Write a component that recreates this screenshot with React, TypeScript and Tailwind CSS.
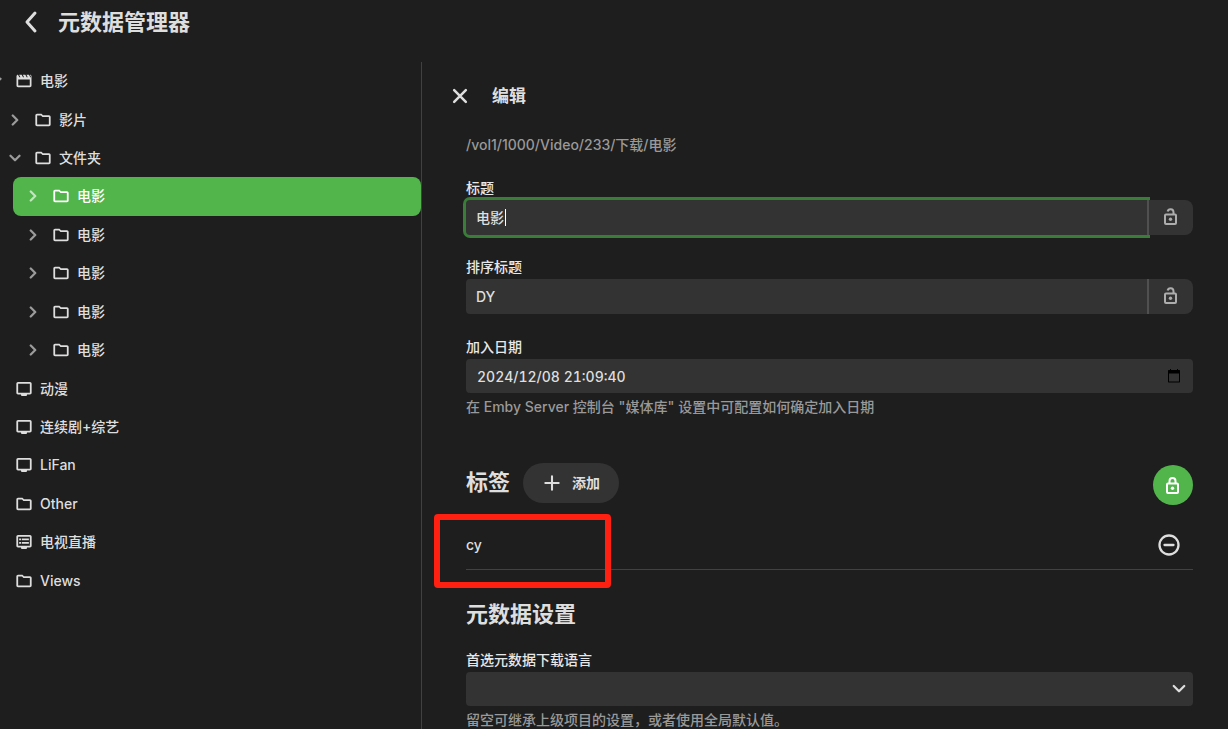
import type { ReactNode } from "react";
import clsx from "clsx";

type IconName = "movie" | "folder" | "tv" | "livetv";

type TreeItem = {
  label: string;
  icon: IconName;
  level: 0 | 1 | 2;
  arrow?: "right" | "down";
  selected?: boolean;
};

const tree: TreeItem[] = [
  { label: "电影", icon: "movie", level: 0, arrow: "down" },
  { label: "影片", icon: "folder", level: 1, arrow: "right" },
  { label: "文件夹", icon: "folder", level: 1, arrow: "down" },
  { label: "电影", icon: "folder", level: 2, arrow: "right", selected: true },
  { label: "电影", icon: "folder", level: 2, arrow: "right" },
  { label: "电影", icon: "folder", level: 2, arrow: "right" },
  { label: "电影", icon: "folder", level: 2, arrow: "right" },
  { label: "电影", icon: "folder", level: 2, arrow: "right" },
  { label: "动漫", icon: "tv", level: 0 },
  { label: "连续剧+综艺", icon: "tv", level: 0 },
  { label: "LiFan", icon: "tv", level: 0 },
  { label: "Other", icon: "folder", level: 0 },
  { label: "电视直播", icon: "livetv", level: 0 },
  { label: "Views", icon: "folder", level: 0 },
];

const levelClass = {
  0: "-ml-[13px]",
  1: "pl-[6px]",
  2: "ml-[13px] pl-[11px]",
};

function StrokeIcon({ d, className, width = 2 }: { d: string; className: string; width?: number }) {
  return (
    <svg
      viewBox="0 0 24 24"
      className={className}
      fill="none"
      stroke="currentColor"
      strokeWidth={width}
      strokeLinecap="round"
      strokeLinejoin="round"
      aria-hidden="true"
    >
      <path d={d} />
    </svg>
  );
}

const iconPaths: Record<IconName, string> = {
  folder:
    "M9.300 5.900l2 2.100h8.500v10.100H4.200V5.900h5.100M10 3.800H4c-1.200 0-2.200 1-2.200 2.200v12c0 1.200 1 2.200 2.200 2.200h16c1.200 0 2.200-1 2.200-2.200V8c0-1.200-1-2.200-2.200-2.200h-8z",
  movie:
    "M4 3.500l1.800 3.500h1.400L5.500 3.500h3.400L10.700 7h1.400L10.400 3.500h3.400L15.600 7H17l-1.700-3.500h3.300L20.400 7h1.100L20 3.500c1.200 0 2 .9 2 2V18c0 1.200-.9 2.200-2.200 2.200H4.200C2.900 20.200 2 19.200 2 18V5.500c0-1.100.8-2 2-2zM4.300 10v7.900h15.400V10z",
  tv: "M20 2.700H4c-1.200 0-2.200 1-2.200 2.300v12c0 1.300 1 2.200 2.200 2.200h4v.8c0 .8.500 1.300 1.200 1.300h5.600c.7 0 1.200-.5 1.200-1.300v-.8h4c1.200 0 2.200-.9 2.200-2.200V5c0-1.300-1-2.300-2.200-2.300zm-.2 14.200H4.200V5.100h15.600v11.800z",
  livetv:
    "M20 2.700H4c-1.200 0-2.200 1-2.200 2.300v12c0 1.300 1 2.200 2.200 2.200h4v.8c0 .8.500 1.300 1.200 1.300h5.600c.7 0 1.200-.5 1.200-1.300v-.8h4c1.200 0 2.200-.9 2.200-2.200V5c0-1.300-1-2.300-2.200-2.300zm-.2 14.200H4.200V5.100h15.600v11.800zM5.500 7.300H8v2.200H5.500zM9 7.300h9.500v2.200H9zM5.500 12H8v2.200H5.500zM9 12h9.500v2.200H9z",
};

function ItemIcon({ name }: { name: IconName }) {
  return (
    <svg viewBox="0 0 24 24" className="size-[18px] shrink-0" fill="currentColor" aria-hidden="true">
      <path d={iconPaths[name]} fillRule="evenodd" />
    </svg>
  );
}

function LockIcon({ open }: { open?: boolean }) {
  return (
    <svg viewBox="0 0 16 17" className="h-[17px] w-4" fill="none" stroke="currentColor" strokeWidth={2} aria-hidden="true">
      <rect x="2" y="6.500" width="11" height="9.500" rx="1" />
      <path d={open ? "M4.600 3.400a3 3 0 0 1 5.900.6v2.500" : "M4.500 6.500V4a3 3 0 0 1 6 0v2.500"} />
      <circle cx="7.500" cy="11.200" r="1.700" fill="currentColor" stroke="none" />
    </svg>
  );
}

function TreeRow({ item }: { item: TreeItem }) {
  return (
    <li className="flex">
      <button
        type="button"
        className={clsx(
          "flex flex-1 items-center rounded-lg text-left whitespace-nowrap",
          levelClass[item.level],
          item.selected && "bg-[#52b54b] text-white",
        )}
      >
        <span className="mr-[10px] flex size-[18px] shrink-0 items-center justify-center opacity-65">
          {item.arrow === "right" && <StrokeIcon d="M9 6l6 6-6 6" className="size-[18px] shrink-0" width={3} />}
          {item.arrow === "down" && <StrokeIcon d="M6 9l6 6 6-6" className="size-[18px] shrink-0" width={3} />}
        </span>
        <ItemIcon name={item.icon} />
        <span className="ml-[7px]">{item.label}</span>
      </button>
    </li>
  );
}

function Label({ htmlFor, children }: { htmlFor: string; children: ReactNode }) {
  return (
    <label htmlFor={htmlFor} className="block h-6 leading-6 text-[#e8e8e8]">
      {children}
    </label>
  );
}

function LockButton() {
  return (
    <button
      type="button"
      aria-label="锁定"
      className="flex w-[46px] items-center justify-center rounded-r-lg border-l-2 border-[#505050] bg-[#333] pb-[2px] text-[#adadad]"
    >
      <LockIcon open />
    </button>
  );
}

export default function App() {
  return (
    <div className="flex h-screen flex-col overflow-hidden bg-[#1e1e1e] font-['Inter','Noto_Sans_CJK_SC',sans-serif] text-sm font-medium text-[#dedede]">
      <header className="flex h-[62px] shrink-0 items-start pt-[6px] pl-[18px]">
        <button type="button" aria-label="返回" className="flex size-8 items-center pl-px">
          <StrokeIcon d="M16 3l-8 9 8 9" className="size-6" width={3} />
        </button>
        <h1 className="ml-2 text-[22px] leading-8 font-bold">元数据管理器</h1>
      </header>

      <div className="flex min-h-0 flex-1">
        <nav className="w-[422px] shrink-0 overflow-hidden border-r border-[#414141]">
          <ul className="grid h-[538px] auto-rows-fr">
            {tree.map((item, i) => (
              <TreeRow key={i} item={item} />
            ))}
          </ul>
        </nav>

        <main className="min-w-0 flex-1 overflow-hidden pr-[35px] pl-11">
          <div className="-ml-[18px] flex h-[68px] items-center">
            <button type="button" aria-label="关闭" className="flex size-6 items-center justify-center">
              <StrokeIcon d="M5 5l14 14M19 5L5 19" className="size-5" width={3} />
            </button>
            <h2 className="ml-5 text-[17px] font-bold">编辑</h2>
          </div>

          <p className="mt-[3px] h-[43px] leading-6 text-[#999]">/vol1/1000/Video/233/下载/电影</p>

          <Label htmlFor="title">标题</Label>
          <div className="relative flex h-[35px]">
            <input
              id="title"
              defaultValue="电影"
              className="min-w-0 flex-1 rounded-l-sm bg-[#333] px-[10px] ring-3 ring-[#3a7d38] outline-none"
            />
            <span className="absolute top-[9px] left-[39px] h-[17px] w-px bg-white" />
            <LockButton />
          </div>

          <div className="mt-5">
            <Label htmlFor="sort">排序标题</Label>
            <div className="flex h-[35px]">
              <input id="sort" defaultValue="DY" className="min-w-0 flex-1 rounded-l-sm bg-[#333] px-[10px] outline-none" />
              <LockButton />
            </div>
          </div>

          <div className="mt-[21px]">
            <Label htmlFor="added">加入日期</Label>
            <div className="flex h-[34px] items-center rounded-sm bg-[#333] pr-3">
              <input
                id="added"
                defaultValue="2024/12/08 21:09:40"
                className="h-full min-w-0 flex-1 bg-transparent pl-[11px] tabular-nums outline-none"
              />
              <svg viewBox="0 0 14 14" className="size-[14px] text-black" fill="currentColor" aria-hidden="true">
                <path d="M3 0h1v1h6V0h1v1h1.500l.5.500V13l-.5.500h-11L1 13V1.500L1.500 1H3zM2 4.500v8h10v-8z" fillRule="evenodd" />
              </svg>
            </div>
            <p className="mt-[2px] leading-6 text-[#999]">在 Emby Server 控制台 "媒体库" 设置中可配置如何确定加入日期</p>
          </div>

          <div className="mt-11 flex h-10 items-center">
            <h2 className="text-[22px] font-bold">标签</h2>
            <button type="button" className="ml-[13px] flex h-10 w-24 items-center justify-center rounded-full bg-[#333] font-bold">
              <StrokeIcon d="M12 4v16M4 12h16" className="mr-[10px] size-5" width={2.5} />
              添加
            </button>
            <button
              type="button"
              aria-label="锁定标签"
              className="mt-1 ml-auto flex size-10 items-center justify-center rounded-full bg-[#52b54b] text-white"
            >
              <LockIcon />
            </button>
          </div>

          <div className="relative mt-[17px]">
            <div className="flex h-[50px] items-center border-b border-[#424242] pr-3">
              <span className="flex-1">cy</span>
              <button type="button" aria-label="移除">
                <StrokeIcon d="M7.500 12h9M21.500 12a9.500 9.500 0 1 1-19 0a9.500 9.500 0 1 1 19 0" className="size-6" width={2.3} />
              </button>
            </div>
            <div className="pointer-events-none absolute -top-[6px] -left-8 h-[74px] w-[177px] rounded border-6 border-[#ff2012]" />
          </div>

          <h2 className="mt-7 text-[22px] leading-8 font-bold">元数据设置</h2>

          <div className="mt-[18px]">
            <Label htmlFor="language">首选元数据下载语言</Label>
            <div className="relative">
              <select id="language" className="block h-[34px] w-full appearance-none rounded-sm bg-[#333] px-[10px]">
                <option value=""></option>
              </select>
              <StrokeIcon
                d="M5 8l7 7 7-7"
                className="pointer-events-none absolute top-2 right-[5px] size-[18px]"
                width={3}
              />
            </div>
            <p className="mt-[2px] leading-6 text-[#999]">留空可继承上级项目的设置，或者使用全局默认值。</p>
          </div>
        </main>
      </div>
    </div>
  );
}
